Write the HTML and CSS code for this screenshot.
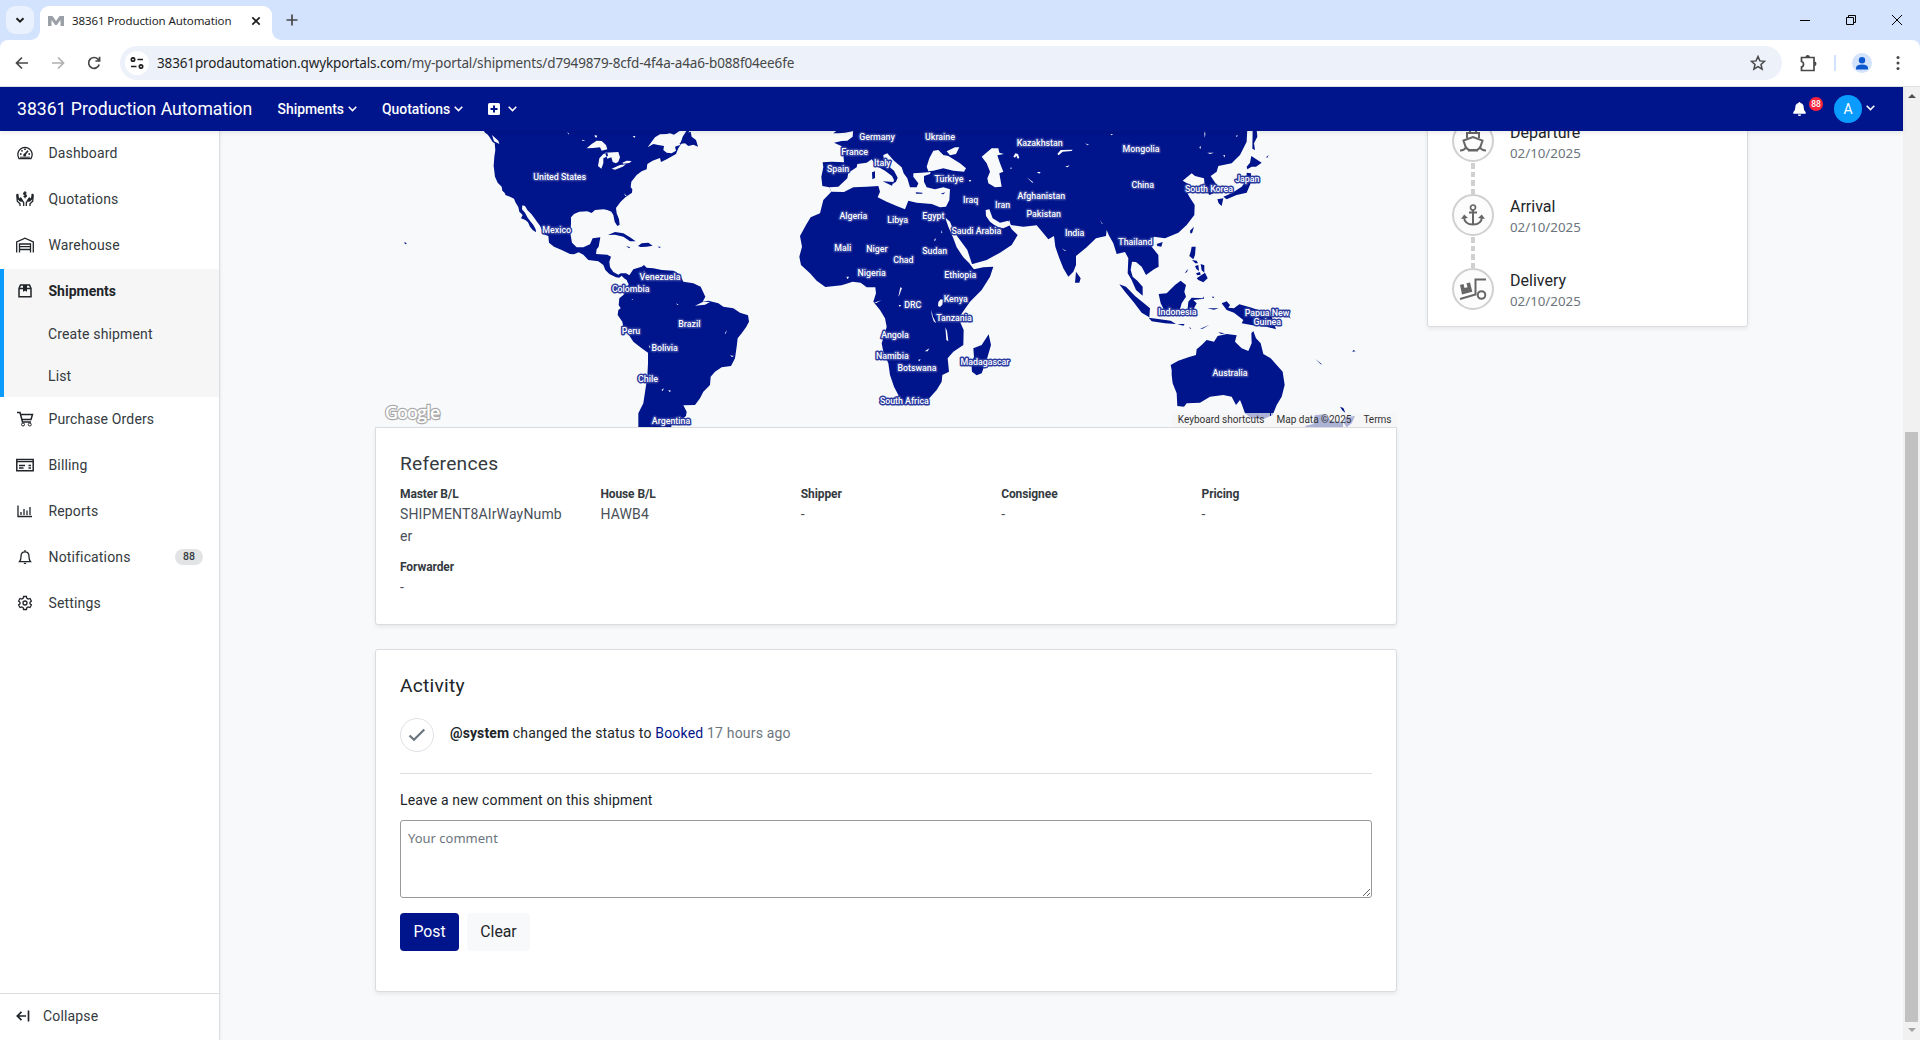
FILE: index.html
```html
<!DOCTYPE html>
<html lang="en">
<head>
<meta charset="utf-8">
<title>38361 Production Automation</title>
<link rel="stylesheet" href="styles.css">
</head>
<body>
<div class="browser">
  <div class="tabstrip">
    <span class="tab-search"><svg width="12" height="12" viewBox="0 0 12 12"><path d="M2.500 4.200L6 7.700 9.500 4.200" class="ln dark w2"/></svg></span>
    <div class="tab">
      <svg width="16" height="10" viewBox="0 0 16 10"><path d="M0 10V0h4.500L8 5l3.500-5H16v10h-3.500V4L8.800 9H7.200L3.500 4v6z" fill="#9aa0a6"/></svg>
      <span class="tab-title">38361 Production Automation</span>
      <svg class="tab-close" width="10" height="10" viewBox="0 0 10 10"><path d="M1.300 1.300l7.400 7.400M8.700 1.300L1.300 8.700" class="ln dark w17"/></svg>
    </div>
    <svg class="new-tab" width="12" height="12" viewBox="0 0 12 12"><path d="M6 .5v11M.5 6h11" class="ln mid w17"/></svg>
    <div class="window-buttons">
      <svg width="10" height="10" viewBox="0 0 10 10"><path d="M0 5.500h10" class="ln black w1"/></svg>
      <svg width="10" height="10" viewBox="0 0 10 10"><path d="M.5 2.500h7v7h-7zM2.500 2.500v-2h7v7h-2" class="ln black w1"/></svg>
      <svg width="10" height="10" viewBox="0 0 10 10"><path d="M0 0l10 10M10 0L0 10" class="ln black w1"/></svg>
    </div>
  </div>
  <div class="toolbar">
    <svg width="14" height="14" viewBox="0 0 14 14"><path d="M13 7H2M7 1.500L1.500 7 7 12.500" class="ln mid w17"/></svg>
    <svg width="14" height="14" viewBox="0 0 14 14"><path d="M1 7h11M7 1.500L12.500 7 7 12.500" class="ln pale w17"/></svg>
    <svg width="14" height="14" viewBox="0 0 14 14"><path d="M12.200 8.500A5.400 5.400 0 1 1 11 3.200L12.300 4.500M12.600 .8v4.200H8.400" class="ln mid w17"/></svg>
    <div class="omnibox">
      <span class="site-info"><svg width="14" height="12" viewBox="0 0 14 12"><path d="M7.500 2.500H13M1 9.500h5.500" class="ln dark w17"/><circle cx="3" cy="2.500" r="1.700" class="ln dark w17"/><circle cx="11" cy="9.500" r="1.700" class="ln dark w17"/></svg></span>
      <span class="url"><b>38361prodautomation.qwykportals.com</b>/my-portal/shipments/d7949879-8cfd-4f4a-a4a6-b088f04ee6fe</span>
      <svg width="16" height="16" viewBox="0 0 16 16"><path d="M8 1.500l1.900 4.400 4.700.4-3.600 3.100 1.100 4.700L8 11.600l-4.100 2.500L5 9.400 1.400 6.300l4.700-.4z" class="ln mid w15"/></svg>
    </div>
    <svg class="ext" width="17" height="17" viewBox="0 0 17 17"><path d="M1.500 2.500H14V15.500H1.500V12q2-.5 2-2.800T1.500 6.500z" class="ln mid w17"/><path d="M5.500 2a2.200 2 0 0 1 4.400 0zM14.500 6.500a2 2.200 0 0 1 0 4.400z" fill="#474747"/></svg>
    <span class="tool-divider"></span>
    <span class="profile"><svg width="12" height="13" viewBox="0 0 12 13"><circle cx="6" cy="3.300" r="3.200" fill="#0b57d0"/><path d="M0 12.500V11q0-3.500 6-3.500t6 3.500v1.500z" fill="#0b57d0"/></svg></span>
    <svg class="kebab" width="4" height="16" viewBox="0 0 4 16"><circle cx="2" cy="2.500" r="1.500"/><circle cx="2" cy="8" r="1.500"/><circle cx="2" cy="13.500" r="1.500"/></svg>
  </div>
</div>

<div class="viewport">
  <div class="app">
    <header class="navbar">
      <span class="brand">38361 Production Automation</span>
      <span class="nav-link ship">Shipments<svg width="9" height="6" viewBox="0 0 9 6"><path d="M.7 .8L4.500 4.600 8.300 .8" class="ln white w15"/></svg></span>
      <span class="nav-link quot">Quotations<svg width="9" height="6" viewBox="0 0 9 6"><path d="M.7 .8L4.500 4.600 8.300 .8" class="ln white w15"/></svg></span>
      <span class="nav-link add"><svg width="12" height="12" viewBox="0 0 12 12"><rect width="12" height="12" rx="1.500" fill="#fff"/><path d="M6 2.500v7M2.500 6h7" stroke="#00148c" stroke-width="2"/></svg><svg width="9" height="6" viewBox="0 0 9 6"><path d="M.7 .8L4.500 4.600 8.300 .8" class="ln white w15"/></svg></span>
      <div class="nav-right">
        <svg width="13" height="14" viewBox="0 0 13 14"><path d="M6.500 0q.9 0 .9 1 3.300.7 3.300 4.600 0 3.200 2 4.600V11.700H.3V10.200q2-1.400 2-4.600Q2.300 1.700 5.600 1q0-1 .9-1zM4.800 12.400h3.400q-.2 1.500-1.700 1.500t-1.700-1.500z" fill="#fff"/></svg>
        <span class="alert-count">88</span>
        <span class="avatar">A</span>
        <svg class="av-chev" width="9" height="6" viewBox="0 0 9 6"><path d="M.7 .8L4.500 4.600 8.300 .8" class="ln white w15"/></svg>
      </div>
    </header>
    <div class="body">
      <nav class="sidebar">
        <a class="item"><svg width="18" height="16" viewBox="0 0 18 16"><path d="M3 13.600A7.200 7.200 0 1 1 15 13.600z" class="ln ink w13"/><path d="M8.600 9.800L12 5.800" class="ln ink w17"/><circle cx="8.700" cy="10" r="1.500"/><circle cx="4.800" cy="9" r=".9"/><circle cx="6" cy="5.800" r=".9"/><circle cx="9" cy="4.200" r=".9"/><circle cx="13.200" cy="9" r=".9"/><path d="M4 12.200h10" class="ln ink w1"/></svg>Dashboard</a>
        <a class="item"><svg width="18" height="16" viewBox="0 0 18 16"><path d="M4 15v-2.300L1.300 10.300.8 4.200q.1-1 1-.9l.7 5 2 2M7.700 15v-3.200L5 7.200q-1-.6-1.200.4l1.700 3.200M14 15v-2.300l2.700-2.400.5-6.100q-.1-1-1-.9l-.7 5-2 2M10.300 15v-3.200L13 7.200q1-.6 1.200.4l-1.700 3.200" class="ln ink w13"/><path d="M10.500 2.200Q9 1.100 7.800 2.100 7.300 3.200 9 3.700t1.300 1.600Q9.200 6.300 7.500 5.300M9 .2v7" class="ln ink w13"/></svg>Quotations</a>
        <a class="item"><svg width="18" height="16" viewBox="0 0 18 16"><path d="M.7 15.500V5L9 1.200 17.300 5v10.500M3.500 15.500V7h11v8.500M3.500 9.700h11M3.500 12.500h11" class="ln ink w13"/></svg>Warehouse</a>
        <div class="group">
          <a class="item current"><svg width="18" height="16" viewBox="0 0 18 16"><path d="M3 5.500v8.300h12V5.500L13.500 2h-9zM3 5.500h12" class="ln ink w15"/><path d="M7 2h4v6.800L9 7.700 7 8.800z" fill="#212529"/></svg>Shipments</a>
          <a class="sub">Create shipment</a>
          <a class="sub">List</a>
        </div>
        <a class="item"><svg width="18" height="16" viewBox="0 0 18 16"><path d="M1 1.500h3L6.500 11H15M4.500 3.500h12L15 8.500H6" class="ln ink w15"/><circle cx="7" cy="13.500" r="1.500" class="ln ink w1"/><circle cx="13.800" cy="13.500" r="1.500" class="ln ink w1"/></svg>Purchase Orders</a>
        <a class="item"><svg width="18" height="16" viewBox="0 0 18 16"><path d="M.8 2.500h16.400v11.300H.8z" class="ln ink w15"/><path d="M.8 4.600h16.400M3 8.500h6M3 11h4.500M12.500 8.500h2.500M12.500 11h2.500" class="ln ink w13"/></svg>Billing</a>
        <a class="item"><svg width="18" height="16" viewBox="0 0 18 16"><path d="M2 2.500v11h14M5 12V9M8 12V6M11 12V7.500M14 12V4" class="ln ink w13"/></svg>Reports</a>
        <a class="item"><svg width="18" height="16" viewBox="0 0 18 16"><path d="M9 1v1.500M3.500 12.700h11Q13 11 13 7.500 13 2.800 9 2.800T5 7.500Q5 11 3.500 12.700z" class="ln ink w13"/><path d="M7.500 13.800h3q-.3 1.400-1.500 1.400t-1.500-1.400z"/></svg>Notifications<span class="pill">88</span></a>
        <a class="item"><svg width="18" height="16" viewBox="0 0 18 16"><path d="M7.600 1.500h2.800l.5 1.900 1.200.7 1.900-.6 1.400 2.500-1.400 1.300v1.400l1.400 1.300-1.400 2.500-1.900-.6-1.200.7-.5 1.900H7.600l-.5-1.900-1.200-.7-1.900.6L2.600 10 4 8.700V7.300L2.600 6 4 3.500l1.900.6 1.200-.7z" class="ln ink w13"/><circle cx="9" cy="8" r="2" class="ln ink w13"/></svg>Settings</a>
        <a class="collapse"><svg width="14" height="12" viewBox="0 0 14 12"><path d="M10 6H1.500M5.500 1.800L1.300 6l4.200 4.200M12.500 .5v11" class="ln ink w17"/></svg>Collapse</a>
      </nav>

      <main class="content">
        <div class="primary">
          <div class="map">
            <svg class="world" viewBox="0 0 3063 888">
              <g transform="translate(-15 -3)" class="land">
                <path d="M340 0L345 8 352 13 358 20 368 36 374 40 376 60 373 80 371 108 375 140 383 158 395 170 397 182 405 190 406 195 420 200 432 206 437 218 445 231 448 245 458 255 453 265 466 270 474 277 480 290 488 300 498 307 497 298 490 285 481 274 473 263 465 248 456 238 457 226 465 228 472 240 484 252 493 264 501 275 510 287 516 300 518 312 535 318 537 338 552 350 575 360 600 372 612 373 626 367 640 374 655 390 685 394 700 405 706 420 718 432 738 442 748 443 755 437 762 445 770 450 775 462 790 440 778 436 768 430 752 430 745 434 730 426 720 412 718 395 723 380 712 374 678 372 680 358 686 350 691 322 668 325 660 343 640 352 620 352 606 338 601 310 603 280 603 262 612 252 628 245 652 244 665 249 675 240 700 238 712 240 724 245 730 255 734 275 742 288 749 284 747 268 740 250 738 234 752 215 766 202 786 188 787 178 782 172 784 155 790 148 800 135 815 124 830 118 832 102 848 92 870 84 873 96 890 88 918 72 925 55 960 0Z"/>
                <path d="M776 462L775 440 790 418 815 410 822 405 830 413 850 415 875 420 910 422 930 434 940 455 970 460 992 470 1006 500 998 515 1015 512 1045 520 1060 530 1090 535 1110 548 1134 556 1137 575 1128 592 1115 610 1103 625 1100 650 1095 685 1083 708 1055 712 1035 725 1022 740 1020 765 1000 785 990 805 975 825 940 826 950 845 948 858 930 872 904 874 904 900 805 900 805 850 820 820 826 780 832 740 834 700 834 668 815 655 790 635 775 612 760 590 757 575 743 555 745 540 752 535 746 525 748 505 760 495 770 480Z"/>
                <path d="M714 315L735 306 760 310 780 322 797 334 780 334 760 320 735 314ZM804 348L815 340 835 338 848 347 830 350 812 351ZM768 349l12 2-2 4ZM862 350l10 0-2 4ZM103 336l8 4-6 3Z"/>
                <path class="sea" d="M833 52L845 35 855 22 870 13 890 12 900 10 912 14 925 5 935 0 953 -3 938 20 930 45 915 50 918 62 905 70 890 68 880 60 882 48 865 45 850 42ZM650 55L665 42 680 32 695 33 708 45 712 58 695 62 690 52 670 54ZM712 68L700 72 688 85 684 108 694 116 700 100 700 85 714 78ZM705 68L745 66 750 82 745 95 738 100 728 96 724 82 712 86ZM725 116L750 105 768 103 758 110 735 119ZM757 98L770 92 785 93 778 99 760 101ZM592 5l6 8-3 0ZM674 15l8 2-3 6-4-2ZM788 18l8 0-2 6ZM636 29l10 2-8 2ZM366 15L385 32 388 42 372 34ZM975 527L1000 515 1020 516 1005 524ZM918 520l8 4-4 1ZM1064 612L1070 600 1068 610ZM836 644l6 8-3 2ZM874 780l8-5-4 8ZM895 780l8 2-4 5ZM1080 676l12 2-6 3ZM784 508l6 0-2 2ZM762 190l8 8-4 0ZM822 420l2 8-4 4Z"/>
                <path d="M928 42L940 28 952 8 962 5 965 20 978 30 984 50 970 44 955 48 945 40Z"/>
              </g>
              <g transform="translate(1185 -3)" class="land">
                <path d="M250 -5L248 20 232 32 215 33 192 38 214 48 220 70 222 97 185 95 158 97 160 112 154 140 157 168 178 172 184 185 160 210 150 250 122 262 108 285 90 318 96 350 88 380 93 405 120 430 140 452 166 471 215 466 248 455 272 458 290 472 316 472 318 490 310 515 330 540 345 565 350 590 345 610 335 640 340 665 355 700 360 735 372 770 385 795 395 822 440 825 475 808 500 780 515 755 517 735 537 725 533 685 550 665 580 645 581 600 570 575 572 555 600 515 635 480 660 440 670 410 640 412 612 418 600 402 608 402 650 390 690 368 725 345 743 315 725 298 715 280 718 270 722 285 760 290 800 286 812 300 835 328 852 318 856 350 868 385 880 415 895 440 910 425 918 405 918 378 950 352 978 325 1008 318 1010 300 1016 315 1030 340 1040 372 1065 366 1075 385 1073 430 1085 450 1098 480 1118 497 1118 470 1102 452 1088 440 1082 420 1086 395 1098 396 1115 410 1128 435 1152 418 1166 410 1165 375 1145 350 1138 335 1152 320 1185 325 1225 308 1250 285 1273 255 1274 225 1258 200 1250 185 1260 165 1238 152 1265 130 1275 138 1302 145 1305 175 1318 195 1335 188 1340 165 1322 138 1340 125 1345 108 1385 100 1410 75 1430 35 1432 -5Z"/>
                <path class="sea" d="M184 185L178 172 205 170 232 145 235 128 260 112 262 102 290 98 305 88 320 108 345 122 366 138 372 150 368 162 378 155 383 143 372 122 355 108 342 92 340 75 352 70 372 92 395 112 401 130 412 145 420 172 440 172 445 160 430 140 430 130 455 128 482 126 480 132 462 138 462 155 470 172 495 178 520 172 540 178 538 210 528 230 510 232 485 222 440 218 415 212 405 238 380 228 350 215 323 202 330 185 325 168 290 170 250 172 222 186Z"/>
                <path class="sea" d="M470 110L478 85 490 62 505 60 520 75 535 78 570 100 588 115 582 125 550 122 520 115 490 122 475 124ZM530 64L555 52 568 52 558 72 540 76ZM635 80L665 55 685 55 688 68 702 72 682 76 690 100 700 125 688 130 695 170 675 172 655 160 652 145 660 125 650 100ZM525 262L540 275 552 305 570 330 592 360 606 402 612 418 600 402 580 382 560 352 550 325 535 290ZM647 240L658 238 668 265 690 278 715 272 722 285 700 295 680 290 660 275 648 258ZM505 516L512 508 519 509 517 524 510 531 504 528ZM526 592l5 10 4 32-6-4ZM484 540l5 20 10 20-8-6-6-20ZM862 72L872 60 908 59 905 63 878 65 866 76ZM730 80l6-10 8 2 4 12-5 2-4-9-4 6ZM885 110l14-4-6 6ZM800 126l12 0-4 5ZM596 150l8 0-4 6ZM720 113l6 0-3 5ZM770 142l20 15-3 1ZM945 40l12 4-4 2ZM464 664l14-9-5 9ZM444 690l8-3-4 7ZM386 525l8 0-5 6ZM385 500l6-28 5 2-8 22ZM312 518l22-7-15 8ZM229 440l8 0-4 8ZM492 330l6-6-3 10ZM514 300l3 8-3 2ZM875 355l14 8-4 0ZM990 270l8 12-2 0Z"/>
                <path class="sea" d="M1021 12l8 0-4 4ZM1303 10l2-6 1 10-2 9ZM1288 52l5-4-2 10ZM1312 68l20 0-12 4ZM1360 75l5 0-2 8ZM1398 18l5-4-2 8Z"/>
                <path d="M306 127l9-3 0 20-8 4ZM338 154l32 2-4 11ZM437 187l20 1 0 3-18 0ZM512 191l14-4-6 6ZM656 613L663 645 650 690 635 730 620 736 606 725 604 700 612 680 610 655 635 645ZM918 425L932 445 928 458 915 458ZM190 10L200 2 190 -5 248 -5 248 4 225 8 205 10Z"/>
                <path d="M1448 0L1460 0 1462 20 1452 40 1455 60 1447 56ZM1444 78L1475 98 1458 110 1445 110 1432 118 1430 110 1440 98ZM1430 128L1443 130 1442 160 1430 188 1400 195 1370 208 1360 200 1385 190 1415 170 1430 150ZM1342 208L1360 205 1355 228 1346 220ZM1488 82l8-7-4 8ZM1260 302L1272 290 1266 310 1261 310ZM1160 342L1178 336 1174 350 1162 348ZM1265 350L1277 350 1275 375 1270 388 1258 378 1262 365ZM1280 445L1305 428 1313 445 1300 457 1285 450ZM1244 430l10-14-3 10ZM1266 390l14 2 4 8-8 0ZM1275 408l10-3 2 18-8-6ZM1292 402l11 4 0 22-8-7ZM1278 430l12-4 2 8-10 2ZM1048 463L1068 470 1095 498 1120 518 1140 535 1138 562 1115 548 1090 515 1065 485ZM1136 563L1170 568 1202 572 1218 582 1185 580 1145 574ZM1166 492L1190 490 1215 465 1232 452 1248 465 1243 485 1248 500 1235 520 1228 545 1185 545 1172 520ZM1252 545L1255 515 1265 503 1298 505 1300 499 1302 506 1270 510 1280 520 1272 535 1280 548 1265 552ZM1222 582l22 0-4 5ZM1258 590l6 6-4 0ZM1290 597l28-13-20 12ZM1312 535l34 0-14 4ZM1325 500l8 0-3 5ZM1355 520L1370 514 1380 525 1375 533 1392 535 1408 523 1440 532 1480 545 1505 560 1518 598 1490 590 1460 588 1415 580 1420 570 1392 548 1370 540ZM1535 552l20 2 8 12-12-8ZM1345 607l20 3-12 2ZM1636 687l18 14 0 3ZM1750 660l7 4-10 1Z"/>
                <path d="M1202 705L1225 692 1255 682 1278 675 1280 658 1295 645 1310 630 1332 635 1343 618 1370 612 1400 616 1395 635 1415 655 1435 663 1445 640 1444 610 1450 603 1458 625 1472 640 1480 672 1502 685 1520 705 1538 725 1544 765 1535 800 1520 825 1508 855 1480 868 1445 865 1425 850 1415 822 1410 810 1398 825 1385 800 1360 795 1320 800 1290 818 1250 820 1242 830 1222 828 1220 790 1208 760 1205 735 1205 720ZM1710 830l10 4 6 14-8-6ZM1725 862L1755 858 1745 880 1730 892 1722 880ZM1605 888l25-6 4-26 30-3 20 20 35 4 0 16-110 0Z"/>
              </g>
              <g transform="translate(-15 -3)" class="labels">
                <text x="569" y="150">United States</text><text x="560" y="309">Mexico</text><text x="870" y="450">Venezuela</text><text x="782" y="486">Colombia</text><text x="958" y="591">Brazil</text><text x="783" y="612">Peru</text><text x="884" y="663">Bolivia</text><text x="834" y="756">Chile</text><text x="903" y="882">Argentina</text>
              </g>
              <g transform="translate(1185 -3)" class="labels">
                <text x="321" y="30">Germany</text><text x="510" y="30">Ukraine</text><text x="254" y="75">France</text><text x="337" y="108">Italy</text><text x="204" y="126">Spain</text><text x="537" y="156">Türkiye</text><text x="602" y="219">Iraq</text><text x="698" y="234">Iran</text><text x="809" y="48">Kazakhstan</text><text x="814" y="207">Afghanistan</text><text x="821" y="261">Pakistan</text><text x="914" y="318">India</text><text x="250" y="267">Algeria</text><text x="383" y="279">Libya</text><text x="490" y="267">Egypt</text><text x="619" y="312">Saudi Arabia</text><text x="218" y="363">Mali</text><text x="321" y="366">Niger</text><text x="400" y="399">Chad</text><text x="494" y="372">Sudan</text><text x="305" y="438">Nigeria</text><text x="571" y="444">Ethiopia</text><text x="557" y="517">Kenya</text><text x="428" y="534">DRC</text><text x="552" y="573">Tanzania</text><text x="375" y="624">Angola</text><text x="367" y="687">Namibia</text><text x="441" y="723">Botswana</text><text x="645" y="705">Madagascar</text><text x="403" y="822">South Africa</text>
                <text x="1113" y="66">Mongolia</text><text x="1118" y="174">China</text><text x="1317" y="186">South Korea</text><text x="1432" y="156">Japan</text><text x="1096" y="345">Thailand</text><text x="1222" y="556">Indonesia</text><text x="1491" y="558">Papua New</text><text x="1492" y="585">Guinea</text><text x="1380" y="738">Australia</text>
              </g>
              <text class="google" x="30" y="863">Google</text>
            </svg>
            <div class="map-legal"><span>Keyboard shortcuts</span><span>Map data ©2025</span><span>Terms</span></div>
          </div>
          <section class="card references">
            <h2>References</h2>
            <dl>
              <div><dt>Master B/L</dt><dd>SHIPMENT8AIrWayNumber</dd></div>
              <div><dt>House B/L</dt><dd>HAWB4</dd></div>
              <div><dt>Shipper</dt><dd>-</dd></div>
              <div><dt>Consignee</dt><dd>-</dd></div>
              <div><dt>Pricing</dt><dd>-</dd></div>
              <div><dt>Forwarder</dt><dd>-</dd></div>
            </dl>
          </section>
          <section class="card activity">
            <h2>Activity</h2>
            <div class="event"><span class="check"><svg width="18" height="14" viewBox="0 0 18 14"><path d="M1.500 7.500l4.500 4.300L16.300 1.500" class="ln grey w22"/></svg></span><p><b>@system</b> changed the status to <a>Booked</a> <small>17 hours ago</small></p></div>
            <label for="comment">Leave a new comment on this shipment</label>
            <textarea id="comment" placeholder="Your comment"></textarea>
            <div class="buttons"><button class="post">Post</button><button class="clear">Clear</button></div>
          </section>
        </div>
        <aside class="card timeline">
          <div class="step"><span class="dot"><svg width="28" height="24" viewBox="0 0 28 24"><path d="M11 3V0h6v3M8 9V4h12v5M4.500 11.500L14 8l9.500 3.500L21.500 17.500q-2 3.500-4 3.500h-7q-2 0-4-3.500zM1 21.500q5 0 6-4M27 21.500q-5 0-6-4M9 21.500h10" class="ln icon w2"/></svg></span><div><h3>Departure</h3><time>02/10/2025</time></div></div>
          <div class="step"><span class="dot"><svg width="24" height="24" viewBox="0 0 24 24"><circle cx="12" cy="4.500" r="2.500" class="ln icon w17"/><path d="M12 7v14M8 9.500h8M3 14q.5 7.500 9 7.500T21 14" class="ln icon w2"/><path d="M0 16l3.200-4.500L7 15zM24 16l-3.200-4.500L17 15z" fill="#666"/></svg></span><div><h3>Arrival</h3><time>02/10/2025</time></div></div>
          <div class="step"><span class="dot"><svg width="28" height="24" viewBox="0 0 28 24"><path d="M27 2.500H16.500V17.500L1 22" class="ln icon w2"/><circle cx="22.500" cy="18" r="3.800" class="ln icon w2"/><path d="M1 8l3.500-1 1 4 3-.8-1-4L11 5.500l2.300 9.300L3 17.500z" fill="#666"/></svg></span><div><h3>Delivery</h3><time>02/10/2025</time></div></div>
        </aside>
      </main>
    </div>
  </div>
  <div class="scrollbar"><span class="arrow up"></span><span class="thumb"></span><span class="arrow down"></span></div>
</div>
</body>
</html>
```
FILE: styles.css
```css
* { box-sizing: border-box; }
body { margin: 0; width: 1920px; height: 1040px; overflow: hidden; display: flex; flex-direction: column; font-family: Roboto, "Liberation Sans", sans-serif; color: #212529; background: #f8f9fb; }
svg { display: block; flex: none; }

/* line icons */
.ln { fill: none; }
.dark { stroke: #1f1f1f; } .mid { stroke: #474747; } .pale { stroke: #b0b0b0; } .black { stroke: #000; }
.white { stroke: #fff; } .ink { stroke: #212529; } .icon { stroke: #666; } .grey { stroke: #6c757d; }
.w1 { stroke-width: 1; } .w13 { stroke-width: 1.3; } .w15 { stroke-width: 1.5; } .w17 { stroke-width: 1.7; } .w2 { stroke-width: 2; } .w22 { stroke-width: 2.2; }

/* browser frame */
.browser { height: 87px; flex: none; background: #d3e3fd; font-family: "Noto Sans", "Open Sans", sans-serif; }
.tabstrip { height: 40px; display: flex; align-items: center; padding-left: 6px; }
.tab-search { width: 28px; height: 28px; border-radius: 9px; background: #e9f0fe; display: grid; place-items: center; }
.tab { position: relative; margin-left: 6px; width: 232px; height: 34px; align-self: flex-end; background: #fff; border-radius: 9px 9px 0 0; display: flex; align-items: center; padding: 0 11px 5px 8px; }
.tab::before, .tab::after { content: ""; position: absolute; bottom: 0; width: 9px; height: 9px; }
.tab::before { left: -9px; background: radial-gradient(circle at 0 0, transparent 8.500px, #fff 9px); }
.tab::after { right: -9px; background: radial-gradient(circle at 100% 0, transparent 8.500px, #fff 9px); }
.tab-title { margin-left: 8px; font-size: 11.500px; letter-spacing: -.1px; color: #1f1f1f; white-space: nowrap; }
.tab-close { margin-left: auto; }
.new-tab { margin-left: 14px; }
.window-buttons { margin-left: auto; display: flex; gap: 36px; padding-right: 18px; }
.toolbar { height: 47px; background: #fff; border-radius: 8px 8px 0 0; border-bottom: 1px solid #dfe1e5; display: flex; align-items: center; padding-left: 15px; }
.toolbar > svg + svg { margin-left: 22px; }
.omnibox { margin-left: 19px; width: 1662px; height: 34px; border-radius: 17px; background: #ecf1fa; display: flex; align-items: center; padding: 0 16px 0 5px; }
.site-info { width: 24px; height: 24px; border-radius: 50%; background: #fff; display: grid; place-items: center; }
.url { margin-left: 8px; font-size: 13.500px; letter-spacing: -.14px; color: #474747; flex: 1; white-space: nowrap; }
.url b { font-weight: 400; color: #1f1f1f; }
.ext { margin-left: 18px; }
.tool-divider { margin-left: 17px; width: 2px; height: 16px; background: #d3e3fd; }
.profile { margin-left: 16px; width: 20px; height: 20px; border-radius: 50%; background: #d3e3fd; display: grid; place-items: center; }
.kebab { margin-left: 24px; fill: #474747; }

.viewport { flex: 1; min-height: 0; display: flex; }
.app { width: 1903px; display: flex; flex-direction: column; }
.scrollbar { width: 17px; background: #f1f1f1; display: flex; flex-direction: column; align-items: center; }
.arrow { width: 0; height: 0; border: 4px solid transparent; }
.up { margin-top: 3px; border-bottom-color: #505050; }
.down { margin-top: 6px; border-top: 4px solid #a3a3a3; }
.thumb { margin-top: 334px; width: 13px; height: 590px; background: #c1c1c1; }

/* top bar */
.navbar { position: relative; z-index: 2; height: 44px; flex: none; background: #00148c; color: #fff; display: flex; align-items: center; padding: 0 28px 0 17px; box-shadow: 0 2px 5px rgba(0, 0, 0, .08); }
.brand { width: 260.500px; font-size: 17.600px; white-space: nowrap; }
.nav-link { display: flex; align-items: center; font-size: 13.900px; font-weight: 500; }
.nav-link svg { margin-left: 4px; }
.ship { width: 104.500px; }
.quot { width: 106px; }
.add svg + svg { margin-left: 8px; }
.add svg:first-child { margin-left: 0; }
.nav-right { margin-left: auto; display: flex; align-items: center; }
.alert-count { width: 14px; height: 14px; margin: 0 11px 10px 3px; border-radius: 50%; background: #fa243c; font-size: 8.500px; font-weight: 500; display: grid; place-items: center; }
.avatar { width: 28px; height: 28px; border-radius: 50%; background: #0a9bff; font-size: 14px; font-weight: 400; display: grid; place-items: center; }
.av-chev { margin: 0 0 2px 4px; }

.body { flex: 1; min-height: 0; display: flex; overflow: hidden; }

/* side menu */
.sidebar { width: 220px; background: #fff; border-right: 1px solid #dcdee1; display: flex; flex-direction: column; box-shadow: 1px 0 3px rgba(0, 0, 0, .05); font-size: 14px; letter-spacing: .15px; color: #343a40; }
.item { height: 46px; display: flex; align-items: center; padding: 0 16px 3px; }
.item svg { margin-right: 14.500px; fill: #212529; }
.item .ln { fill: none; }
.group { height: 128px; background: #f6f6f6; border-left: 4px solid #0a9bff; }
.group .item { padding-left: 12px; }
.current { font-weight: 700; letter-spacing: 0; color: #212529; }
.sub { height: 41px; display: flex; align-items: center; padding: 0 0 4px 44px; }
.sub + .sub { height: 43px; }
.pill { margin-left: auto; margin-right: 0; width: 28px; height: 16px; border-radius: 8px; background: #e2e3e5; font-size: 10.500px; font-weight: 500; display: grid; place-items: center; }
.collapse { margin-top: auto; height: 47px; border-top: 1px solid #dcdee1; display: flex; align-items: center; padding: 0 0 3px 16px; gap: 13px; }

/* page */
.content { flex: 1; display: flex; align-items: flex-start; gap: 30px; padding-left: 155px; }
.primary { width: 1022px; }
.map { position: relative; height: 296px; }
.world { width: 1021px; height: 296px; }
.land path { fill: #00148c; }
.land .sea { fill: #f8f9fb; }
.labels text { font: 500 26.400px Roboto, sans-serif; fill: #fff; stroke: #2c3c9f; stroke-width: 9px; stroke-linejoin: round; paint-order: stroke; text-anchor: middle; }
.google { font: 600 54px "Open Sans", sans-serif; fill: #fff; stroke: #aaa; stroke-width: 7px; paint-order: stroke; letter-spacing: -3px; }
.map-legal { position: absolute; right: 0; bottom: 0; height: 14px; display: flex; gap: 1px; font-size: 10px; line-height: 14px; color: #333; }
.map-legal span { background: rgba(245, 245, 245, .7); padding: 0 5.500px; }
.card { background: #fff; border: 1px solid #dadce0; border-radius: 3px; box-shadow: 0 2px 4px rgba(0, 0, 0, .07); }
.primary .card { padding: 0 24px; }
h2 { margin: 0; font-size: 19.200px; line-height: 24px; font-weight: 400; letter-spacing: .25px; }
.references { height: 198px; border-radius: 0 0 3px 3px; }
.references h2 { padding-top: 24px; color: #343a40; }
dl { margin: 9px -15px 0; display: grid; grid-template-columns: repeat(5, 200.400px); row-gap: 11px; }
dl div { padding: 0 20px 0 15px; }
dt { font-size: 12px; font-weight: 700; line-height: 18px; letter-spacing: -.1px; color: #343a40; }
dd { margin: 0; font-size: 14px; line-height: 22px; letter-spacing: .15px; color: #495057; overflow-wrap: anywhere; }
.activity { margin-top: 24px; height: 343px; }
.activity h2 { padding-top: 24px; }
.event { margin-top: 20px; height: 56px; border-bottom: 1px solid #dcdee0; display: flex; align-items: flex-start; gap: 16px; }
.check { width: 34px; height: 34px; border: 1px solid #dee2e6; border-radius: 50%; display: grid; place-items: center; }
.event p { margin: 5px 0 0; font-size: 14px; line-height: 20px; letter-spacing: .18px; }
.event b { font-weight: 700; letter-spacing: .1px; }
.event a { color: #00148c; }
.event small { font-size: inherit; color: #6c757d; }
label { display: block; margin-top: 16px; font-size: 14px; line-height: 20px; letter-spacing: .15px; }
textarea { display: block; margin-top: 10px; width: 972px; height: 78px; padding: 8px 7px; border: 1px solid #999; border-radius: 3px; font: 13px "Noto Sans", sans-serif; }
textarea::placeholder { color: #6c757d; }
.buttons { display: flex; gap: 8px; margin-top: 15px; }
button { height: 38px; padding: 0 0 2px; border: 0; border-radius: 4px; font: 15.800px Roboto, sans-serif; }
.post { width: 59px; background: #00148c; color: #fff; }
.clear { width: 63px; background: #f8f9fb; color: #212529; }
.timeline { width: 321px; height: 226px; margin-top: -30px; padding: 18px 24px 0; }
.step { position: relative; height: 74px; display: flex; gap: 16px; }
.step:not(:last-child)::after { content: ""; position: absolute; left: 19px; top: 43px; width: 4px; height: 31px; background: repeating-linear-gradient(#d0d0d0 0 5.800px, transparent 5.800px 8.700px); }
.dot { width: 42px; height: 42px; border: 2px solid #d0d0d0; border-radius: 50%; display: grid; place-items: center; background: #fcfcfc; }
h3 { margin: 0; font-size: 16px; line-height: 20px; font-weight: 400; padding-top: 3px; }
time { display: block; font: 13.300px/20px "Noto Sans", sans-serif; color: #6c757d; }
```
